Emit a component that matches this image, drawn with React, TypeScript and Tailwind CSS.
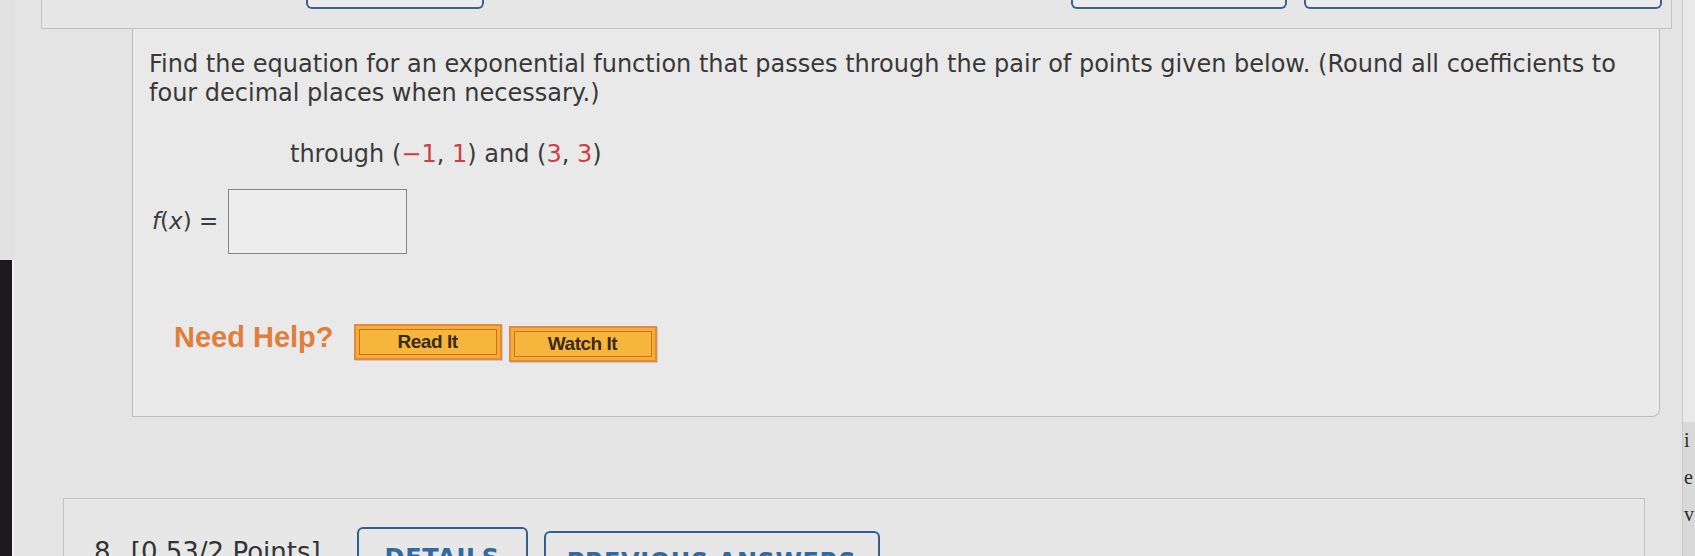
import React from "react";

const sans = "font-['DejaVu_Sans','Verdana',sans-serif]";
const arial = "font-['Liberation_Sans','Arial',sans-serif]";

function HelpButton({ label }: { label: string }) {
    return (
        <button className="w-[148px] h-[36px] border-2 border-[#e9883a] bg-[#f3ad3a] p-[3px] shadow-[1px_1px_0_#c9c9c9]">
            <span className={`flex h-full w-full items-center justify-center border border-[#d46d18] bg-[#f6b63d] text-[19px] font-bold tracking-tight text-[#3a2b14] ${arial}`}>
                {label}
            </span>
        </button>
    );
}

function TabButton({ width }: { width: string }) {
    return <div className={`${width} h-[9px] rounded-b-md border-2 border-t-0 border-[#3e6189] bg-[#ececec]`} />;
}

export default function App() {
    return (
        <div className={`flex h-[556px] w-[1695px] overflow-hidden bg-[#e4e4e4] text-[#3b3b3b] ${sans}`}>
            {/* monitor bezel creeping in on the left */}
            <div className="flex w-[14px] shrink-0 flex-col">
                <div className="h-[260px] bg-[#e2e2e2]" />
                <div className="flex-1 border-r-2 border-[#f2f2f2] bg-[#1d1a1d]" />
            </div>

            <div className="flex min-w-0 flex-1 flex-col border-r border-[#c9c9c9]">
                {/* tail of the previous question card */}
                <div className="ml-[27px] mr-[10px] flex h-[29px] shrink-0 border-x border-b border-[#c3c3c3] bg-[#e6e6e6]">
                    <div className="ml-[264px]">
                        <TabButton width="w-[178px]" />
                    </div>
                    <div className="ml-[587px]">
                        <TabButton width="w-[216px]" />
                    </div>
                    <div className="ml-[17px]">
                        <TabButton width="w-[358px]" />
                    </div>
                </div>

                {/* question panel */}
                <div className="ml-[118px] mr-[22px] h-[388px] shrink-0 rounded-br-lg border-x border-b border-[#bcbcbc] bg-[#e9e9e9] pl-[16px] pt-[21px]">
                    <p className="whitespace-nowrap text-[24px] leading-[29px] text-[#383838]">
                        Find the equation for an exponential function that passes through the pair of points given below. (Round all coefficients to
                        <br />
                        four decimal places when necessary.)
                    </p>

                    <p className="mt-[32px] ml-[141px] whitespace-nowrap text-[24px] leading-[29px]">
                        through (<span className="text-[#d23a48]">−1</span>, <span className="text-[#d23a48]">1</span>) and (<span className="text-[#d23a48]">3</span>, <span className="text-[#d23a48]">3</span>)
                    </p>

                    <div className="mt-[20px] flex items-center">
                        <span className="ml-[3px] text-[23px]">
                            <i>f</i>(<i>x</i>) =
                        </span>
                        <div className="ml-[10px] h-[65px] w-[179px] border border-[#858585] bg-[#ededed]" />
                    </div>

                    <div className="mt-[62px] flex items-center">
                        <span className={`mb-[8px] ml-[25px] text-[29px] font-bold text-[#e37d3b] ${arial}`}>Need Help?</span>
                        <div className="ml-[20px]">
                            <HelpButton label="Read It" />
                        </div>
                        <div className="ml-[7px] mt-[4px]">
                            <HelpButton label="Watch It" />
                        </div>
                    </div>
                </div>

                {/* next question card, cut off by the screen edge */}
                <div className="ml-[49px] mr-[37px] mt-[81px] min-h-0 flex-1 overflow-hidden border-x border-t border-[#c2c2c2] bg-[#e7e7e7]">
                    <div className="flex items-start">
                        <span className="ml-[30px] mt-[38px] text-[26px] leading-[30px] text-[#333]">8.</span>
                        <span className="ml-[12px] mt-[38px] whitespace-nowrap text-[26px] leading-[30px] text-[#333]">[0.53/2 Points]</span>
                        <div className="ml-[36px] mt-[28px] h-[40px] w-[171px] shrink-0 rounded-t-md border-2 border-b-0 border-[#325f8f] pt-[14px] text-center text-[24px] font-semibold leading-[30px] tracking-wide text-[#2f6aa3]">
                            DETAILS
                        </div>
                        <div className="ml-[16px] mt-[32px] h-[40px] w-[336px] shrink-0 rounded-t-md border-2 border-b-0 border-[#325f8f] pt-[14px] text-center text-[24px] font-semibold leading-[30px] tracking-wide text-[#2f6aa3]">
                            PREVIOUS ANSWERS
                        </div>
                    </div>
                </div>
            </div>

            {/* neighbouring window peeking in on the right */}
            <div className="flex w-[12px] shrink-0 flex-col bg-[#e9e9e9] font-['Liberation_Serif',serif] text-[20px] leading-[37px] text-[#2a2a2a]">
                <div className="h-[422px]" />
                <div className="flex-1 bg-[#d9d9d9] pl-[1px]">
                    <div>i</div>
                    <div>e</div>
                    <div>v</div>
                </div>
            </div>
        </div>
    );
}
